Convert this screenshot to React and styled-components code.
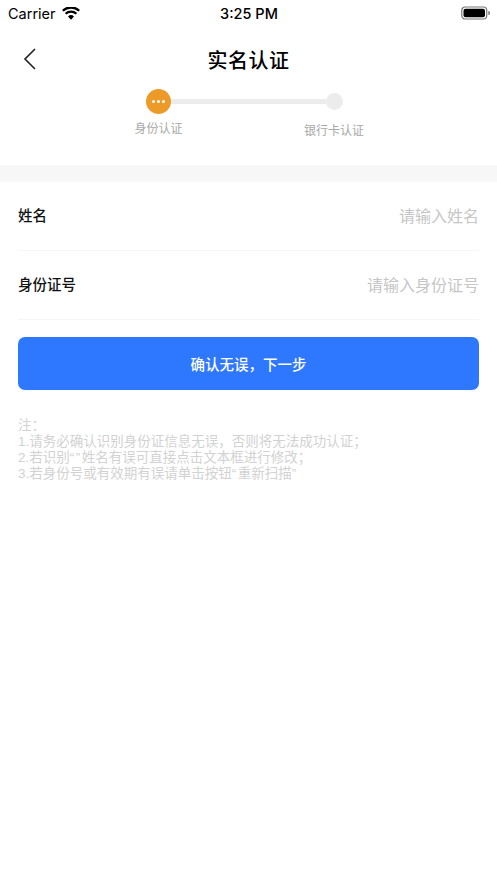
import React from 'react';
import styled, { createGlobalStyle } from 'styled-components';

const Global = createGlobalStyle`
  html, body { margin: 0; padding: 0; background: #fff; }
  * { box-sizing: border-box; }
  body { font-family: "Noto Sans CJK SC", "Liberation Sans", sans-serif; }
`;
const Page = styled.div`
  width: 497px; height: 883px; background: #fff; display: flex; flex-direction: column; overflow: hidden;
`;
const StatusBar = styled.div`
  height: 26px; padding: 0 7px 0 8px; display: grid; grid-template-columns: 1fr auto 1fr; align-items: center;
  font-family: Inter, "Liberation Sans", sans-serif; font-size: 14.5px; color: #000;
`;
const Carrier = styled.div`display: flex; align-items: center; gap: 6px;`;
const Time = styled.div`font-weight: 500;`;
const Battery = styled.div`display: flex; justify-content: flex-end;`;
const NavBar = styled.div`
  height: 52px; margin-top: 7px; display: flex; align-items: center; justify-content: center; position: relative;
`;
const Back = styled.svg`position: absolute; left: 22px; top: 14px;`;
const Title = styled.div`font-size: 20px; font-weight: 500; letter-spacing: 0.5px; color: #000;`;
const Stepper = styled.div`
  height: 80px; padding: 3.5px 0 0 118.5px; display: flex; align-items: flex-start;
`;
const Step = styled.div`
  width: 80px; flex: none; display: flex; flex-direction: column; align-items: center;
`;
const Dot = styled.div`
  width: ${p => (p.$active ? 25 : 17)}px; height: ${p => (p.$active ? 25 : 17)}px;
  margin-top: ${p => (p.$active ? 0 : 4)}px; border-radius: 50%;
  background: ${p => (p.$active ? '#ec9a28' : '#ececec')};
  display: flex; align-items: center; justify-content: center; gap: 2px; z-index: 1;
`;
const Pip = styled.span`width: 3px; height: 3px; border-radius: 50%; background: #fff;`;
const StepLabel = styled.div`
  font-size: 12px; color: #a8a8a8; white-space: nowrap; margin-top: ${p => p.$mt}px; line-height: 18px;
`;
const Track = styled.div`
  width: 155px; flex: none; height: 5px; background: #ececec; margin: 10px -32px 0 -27.5px;
`;
const Divider = styled.div`height: 17px; background: #f7f7f7;`;
const Form = styled.div`padding: 0 18px; display: flex; flex-direction: column;`;
const Row = styled.div`
  height: 69px; padding-bottom: 3px; display: flex; align-items: center; justify-content: space-between;
  border-bottom: 1px solid #f5f5f5;
`;
const Label = styled.div`font-size: 14.5px; font-weight: 500; color: #111;`;
const Placeholder = styled.div`font-size: 16px; color: #c6c6c6;`;
const Submit = styled.button`
  margin: 17px 18px 0; height: 53px; border: 0; border-radius: 7px; background: #2e77ff; color: #fff;
  font: 500 14.5px "Noto Sans CJK SC", sans-serif;
`;
const Notes = styled.div`
  margin: 28px 18px 0; font-family: "Liberation Sans", "Noto Sans CJK SC", sans-serif;
  font-size: 13.5px; line-height: 16px; color: #d2d2d2;
`;
const Quote = styled.span`letter-spacing: 1.5px;`;

export default function App() {
  return (
    <Page>
      <Global />
      <StatusBar>
        <Carrier>
          Carrier
          <svg width="18" height="13" viewBox="0 0 18 13"><path d="M9 12.8 L6 9.4 A4.4 4.4 0 0 1 12 9.4Z M4.4 7.6 L2.8 5.9 A9 9 0 0 1 15.2 5.9 L13.6 7.6 A6.8 6.8 0 0 0 4.4 7.6Z M1.6 4.6 L0 2.9 A13 13 0 0 1 18 2.9 L16.4 4.6 A11 11 0 0 0 1.6 4.6Z" fill="#000"/></svg>
        </Carrier>
        <Time>3:25 PM</Time>
        <Battery>
          <svg width="29" height="14" viewBox="0 0 29 14"><rect x="0.75" y="1" width="25" height="12" rx="3.5" fill="none" stroke="#777" strokeWidth="1.2"/><rect x="2.5" y="2.7" width="21.5" height="8.6" rx="2" fill="#000"/><path d="M27.2 5 a2 2 0 0 1 0 4z" fill="#888"/></svg>
        </Battery>
      </StatusBar>
      <NavBar>
        <Back width="16" height="24" viewBox="0 0 16 24"><path d="M13 2 L3 12 L13 22" fill="none" stroke="#222" strokeWidth="1.6"/></Back>
        <Title>实名认证</Title>
      </NavBar>
      <Stepper>
        <Step>
          <Dot $active><Pip /><Pip /><Pip /></Dot>
          <StepLabel $mt={5}>身份认证</StepLabel>
        </Step>
        <Track />
        <Step>
          <Dot />
          <StepLabel $mt={11}>银行卡认证</StepLabel>
        </Step>
      </Stepper>
      <Divider />
      <Form>
        <Row><Label>姓名</Label><Placeholder>请输入姓名</Placeholder></Row>
        <Row><Label>身份证号</Label><Placeholder>请输入身份证号</Placeholder></Row>
      </Form>
      <Submit>确认无误，下一步</Submit>
      <Notes>
        注：<br />
        1.请务必确认识别身份证信息无误，否则将无法成功认证；<br />
        2.若识别<Quote>“”</Quote>姓名有误可直接点击文本框进行修改；<br />
        3.若身份号或有效期有误请单击按钮<Quote>“</Quote>重新扫描<Quote>”</Quote>
      </Notes>
    </Page>
  );
}
